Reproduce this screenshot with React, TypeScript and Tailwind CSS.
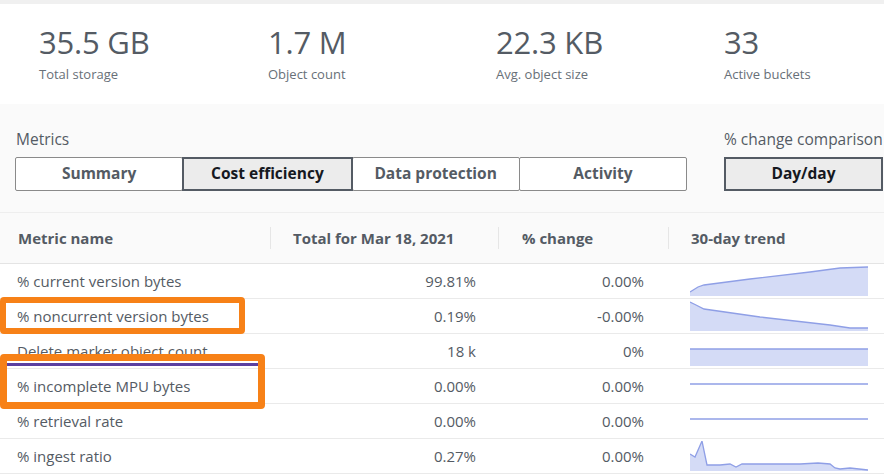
import React from "react";

const stats = [
  { value: "35.5 GB", label: "Total storage" },
  { value: "1.7 M", label: "Object count" },
  { value: "22.3 KB", label: "Avg. object size" },
  { value: "33", label: "Active buckets" },
];

const tabs = ["Summary", "Cost efficiency", "Data protection", "Activity"];

// sparkline shapes, 178 x 30 box
const rows = [
  {
    name: "% current version bytes",
    total: "99.81%",
    change: "0.00%",
    line: "M0,26 L8,21 L14,19 L60,13 L120,6 L150,2 L178,1",
    fill: true,
  },
  {
    name: "% noncurrent version bytes",
    total: "0.19%",
    change: "-0.00%",
    line: "M0,1 L6,4 L14,8 L70,16 L140,24 L160,27 L178,27",
    fill: true,
  },
  {
    name: "Delete marker object count",
    total: "18 k",
    change: "0%",
    line: "M0,13 L178,13",
    fill: true,
  },
  {
    name: "% incomplete MPU bytes",
    total: "0.00%",
    change: "0.00%",
    line: "M0,13 L178,13",
    fill: false,
  },
  {
    name: "% retrieval rate",
    total: "0.00%",
    change: "0.00%",
    line: "M0,13 L178,13",
    fill: false,
  },
  {
    name: "% ingest ratio",
    total: "0.27%",
    change: "0.00%",
    line: "M0,13 L5,16 L12,0 L17,24 L30,24 L40,23 L46,26 L52,23 L110,23 L128,22 L140,23 L145,27 L150,28 L160,27 L178,29",
    fill: true,
  },
];

function Spark({ line, fill }: { line: string; fill: boolean }) {
  return (
    <svg width="178" height="30" viewBox="0 0 178 30" className="block">
      {fill && <path d={line + " L178,30 L0,30 Z"} fill="#d4dbf6" />}
      <path d={line} fill="none" stroke="#8f9fe6" strokeWidth="1.3" />
    </svg>
  );
}

export default function App() {
  return (
    <div
      className="relative w-[884px] h-[474px] overflow-hidden bg-[#fafafa] text-[#545b64]"
      style={{ fontFamily: '"Open Sans", "Noto Sans", sans-serif' }}
    >
      <div className="h-[4px] bg-[#f0f0f0]" />
      {/* stats card */}
      <div className="h-[100px] bg-white grid grid-cols-[229px_228px_228px_199px] pl-[39px] pt-[18px]">
        {stats.map((s) => (
          <div key={s.label}>
            <div className="text-[31px] leading-[40px] text-[#545b64] tracking-[-0.2px]">{s.value}</div>
            <div className="text-[13px] leading-[18px] text-[#687078] mt-[3px]">{s.label}</div>
          </div>
        ))}
      </div>

      {/* metrics selectors */}
      <div className="h-[109px] flex pt-[25px] border-b border-[#eeeeee]">
        <div className="pl-[16px] w-[708px]">
          <div className="text-[15.5px] leading-[21px] text-[#545b64]">Metrics</div>
          <div className="flex mt-[7px] w-[671px] h-[34px]">
            {tabs.map((t, i) => (
              <div
                key={t}
                className={
                  i === 1
                    ? "flex-1 flex items-center justify-center text-[15.5px] font-bold text-[#16191f] bg-[#ececec] border-2 border-[#545b64] -ml-[1px] relative z-10"
                    : "flex-1 flex items-center justify-center text-[15.5px] font-bold text-[#545b64] bg-white border border-[#8a8a8a] rounded-[2px] -ml-[1px]"
                }
              >
                {t}
              </div>
            ))}
          </div>
        </div>
        <div className="pl-[16px]">
          <div className="text-[15.5px] leading-[21px] whitespace-nowrap text-[#545b64]">% change comparison</div>
          <div className="mt-[7px] w-[159px] h-[34px] flex items-center justify-center text-[15.5px] font-bold text-[#16191f] bg-[#ececec] border-2 border-[#545b64]">
            Day/day
          </div>
        </div>
      </div>

      {/* table */}
      <div className="grid grid-cols-[270px_228px_170px_216px] h-[51px] items-center border-b border-[#e4e4e4] text-[15px] font-bold text-[#545b64]">
        <div className="pl-[18px]">Metric name</div>
        <div className="pl-[22px] border-l border-[#e6e6e6] h-[22px] flex items-center">Total for Mar 18, 2021</div>
        <div className="pl-[23px] border-l border-[#e6e6e6] h-[22px] flex items-center">% change</div>
        <div className="pl-[22px] border-l border-[#e6e6e6] h-[22px] flex items-center">30-day trend</div>
      </div>
      <div className="bg-white">
        {rows.map((r) => (
          <div
            key={r.name}
            className="grid grid-cols-[270px_228px_170px_216px] h-[35px] items-center border-b border-[#eaeaea] text-[15px] text-[#545b64]"
          >
            <div className="pl-[17px] whitespace-nowrap">{r.name}</div>
            <div className="text-right pr-[22px]">{r.total}</div>
            <div className="text-right pr-[24px]">{r.change}</div>
            <div className="pl-[22px]">
              <Spark line={r.line} fill={r.fill} />
            </div>
          </div>
        ))}
      </div>

      {/* annotation highlights */}
      <div className="absolute left-0 top-[297px] w-[245px] h-[37px] border-[6px] border-[#f78117] rounded-[4px]" />
      <div className="absolute left-0 top-[354px] w-[265px] h-[55px] border-[7px] border-[#f78117] rounded-[4px]">
        <div className="h-[3px] bg-[#5b3fa0] mt-[2px]" />
      </div>
    </div>
  );
}
